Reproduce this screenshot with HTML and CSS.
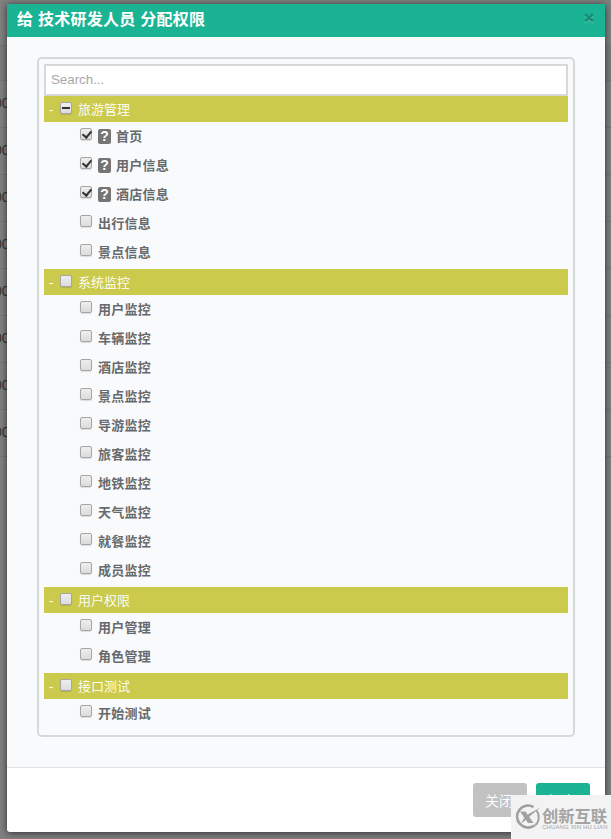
FILE: index.html
```
<!DOCTYPE html>
<html lang="zh">
<head>
<meta charset="UTF-8">
<title>分配权限</title>
<link rel="stylesheet" href="styles.css">
</head>
<body>
<div class="page">
    <div class="line first"></div>
    <div class="line thead"></div>
    <div class="line">00</div>
    <div class="line">00</div>
    <div class="line">00</div>
    <div class="line">00</div>
    <div class="line">00</div>
    <div class="line">00</div>
    <div class="line">00</div>
    <div class="line">00</div>
</div>
<div class="modal">
    <div class="modal-header">
        <h4>给 技术研发人员 分配权限</h4>
        <span class="close"><svg width="12" height="12" viewBox="0 0 12 12"><path class="glow" d="M2 3l8 7.500M10 3l-8 7.500"/><path d="M2 2l8 7.500M10 2l-8 7.500"/></svg></span>
    </div>
    <div class="modal-body">
        <div class="tree">
            <input type="text" class="search" placeholder="Search...">
            <div class="group"><span class="fold">-</span><i class="box half"></i><span>旅游管理</span></div>
            <ul>
                <li><i class="box on"></i><b class="help">?</b><span>首页</span></li>
                <li><i class="box on"></i><b class="help">?</b><span>用户信息</span></li>
                <li><i class="box on"></i><b class="help">?</b><span>酒店信息</span></li>
                <li><i class="box"></i><span>出行信息</span></li>
                <li><i class="box"></i><span>景点信息</span></li>
            </ul>
            <div class="group"><span class="fold">-</span><i class="box"></i><span>系统监控</span></div>
            <ul>
                <li><i class="box"></i><span>用户监控</span></li>
                <li><i class="box"></i><span>车辆监控</span></li>
                <li><i class="box"></i><span>酒店监控</span></li>
                <li><i class="box"></i><span>景点监控</span></li>
                <li><i class="box"></i><span>导游监控</span></li>
                <li><i class="box"></i><span>旅客监控</span></li>
                <li><i class="box"></i><span>地铁监控</span></li>
                <li><i class="box"></i><span>天气监控</span></li>
                <li><i class="box"></i><span>就餐监控</span></li>
                <li><i class="box"></i><span>成员监控</span></li>
            </ul>
            <div class="group"><span class="fold">-</span><i class="box"></i><span>用户权限</span></div>
            <ul>
                <li><i class="box"></i><span>用户管理</span></li>
                <li><i class="box"></i><span>角色管理</span></li>
            </ul>
            <div class="group"><span class="fold">-</span><i class="box"></i><span>接口测试</span></div>
            <ul>
                <li><i class="box"></i><span>开始测试</span></li>
            </ul>
        </div>
    </div>
    <div class="modal-footer">
        <button type="button" class="btn">关闭</button>
        <button type="button" class="btn btn-primary">提交</button>
    </div>
</div>
<div class="mark">
    <svg width="27" height="26" viewBox="0 0 27 26">
        <path class="ring" d="M19.500 3A11 11 0 1 0 20.500 21.500"/>
        <path class="arc" d="M22.500 6.500A11 11 0 0 1 21 21.500"/>
        <path d="M6 7.500h5.500l8 11.500h-5.500z"/>
        <path d="M26.500 3.500L16 12l-3 3-6 4.500 2.500-4.500 5-5z"/>
    </svg>
    <div class="mark-text">
        <strong>创新互联</strong>
        <small>CHUANG XIN HU LIAN</small>
    </div>
</div>
</body>
</html>
```

FILE: styles.css
```
*{
    margin:0;
    padding:0;
    box-sizing:border-box;
    list-style:none;
}
body{
    height:839px;
    overflow:hidden;
    position:relative;
    background:#808080;
    font:13px "Liberation Sans","Noto Sans CJK SC",sans-serif;
    color:#676a6c;
}
.page{
    position:absolute;
    top:0;
    left:0;
    width:100%;
}
.line{
    height:47px;
    border-bottom:1px solid #747474;
    line-height:44px;
    font-size:14px;
    color:#343536;
    text-indent:-6px;
}
.line.first{
    height:46px;
}
.line.thead{
    height:35px;
    background:#7b7b7c;
}
/* dialog */
.modal{
    position:absolute;
    top:4px;
    left:7px;
    width:598px;
    height:828px;
    display:flex;
    flex-direction:column;
    background:#fff;
    border-radius:0 0 3px 3px;
    box-shadow:0 1px 7px rgba(0,0,0,.65);
}
.modal-header{
    height:33px;
    padding:0 10px;
    display:flex;
    justify-content:space-between;
    background:#1ab394;
}
.modal-header h4{
    font-size:16px;
    line-height:32px;
    letter-spacing:.25px;
    color:#fff;
}
.close{
    padding-top:8px;
    line-height:0;
}
.close svg{
    fill:none;
    stroke:#158f76;
    stroke-width:2.6;
}
.close .glow{
    stroke:#5cc5af;
}
.modal-body{
    height:731px;
    padding:20px 30px 0;
    background:#f9fafc;
    border-bottom:1px solid #e0e2e4;
}
.tree{
    height:680px;
    padding:5px;
    border:2px solid #d6d8da;
    border-radius:5px;
}
.search{
    display:block;
    width:100%;
    height:32px;
    padding:0 5px 2px;
    border:2px solid #d6d8da;
    background:#fff;
    font:13.3px "Liberation Sans",sans-serif;
}
.search::placeholder{
    color:#a9a9a9;
}
.group{
    height:26px;
    display:flex;
    padding-left:5px;
    line-height:28px;
    background:#cbca4d;
    color:#fff;
}
.group span{
    font-weight:350;
}
.fold{
    width:11px;
}
.tree ul{
    padding:0 0 2px 36px;
}
.tree li{
    display:flex;
    height:29px;
    line-height:30px;
    font-weight:bold;
    letter-spacing:.25px;
}
.box{
    width:12px;
    height:12px;
    margin:6px 6px 0 0;
    flex:none;
    position:relative;
    border:1px solid #a6a6a6;
    border-radius:2px;
    background:linear-gradient(#eee,#dcdcdc);
    box-shadow:0 1px 1px rgba(0,0,0,.12);
}
.box.half:after{
    content:"";
    position:absolute;
    top:4px;
    left:1px;
    width:8px;
    height:2px;
    background:#333;
}
.box.on:after{
    content:"";
    position:absolute;
    top:0;
    left:3px;
    width:4px;
    height:7px;
    border:solid #333;
    border-width:0 2px 2px 0;
    transform:rotate(40deg);
}
.help{
    width:13px;
    height:15px;
    margin:7px 5px 0 0;
    border-radius:2px;
    background:#757575;
    color:#fff;
    font-size:14px;
    line-height:15px;
    letter-spacing:0;
    text-align:center;
}
.modal-footer{
    flex:1;
    display:flex;
    justify-content:flex-end;
    padding:15px 15px 0 0;
}
.btn{
    width:54px;
    height:34px;
    margin-left:9px;
    padding-right:2px;
    border:0;
    border-radius:3px;
    background:#c2c2c2;
    color:#fff;
    font:350 14px "Noto Sans CJK SC",sans-serif;
}
.btn-primary{
    background:#1ab394;
}
/* corner logo */
.mark{
    position:absolute;
    right:0;
    bottom:0;
    width:100px;
    height:44px;
    padding:9px 0 0 3px;
    display:flex;
    background:#f3f3f3;
    color:#a3a3a3;
}
.mark svg{
    flex:none;
    fill:#a0a0a0;
}
.mark .ring,.mark .arc{
    fill:none;
    stroke:#a0a0a0;
    stroke-width:2.6;
}
.mark .arc{
    stroke-width:1.8;
}
.mark-text{
    width:67px;
    margin-left:1px;
}
.mark-text strong{
    display:block;
    height:20px;
    font-size:16.3px;
    line-height:24px;
    white-space:nowrap;
}
.mark-text small{
    display:block;
    font-size:6px;
    line-height:7px;
    letter-spacing:.15px;
    white-space:nowrap;
}
```
